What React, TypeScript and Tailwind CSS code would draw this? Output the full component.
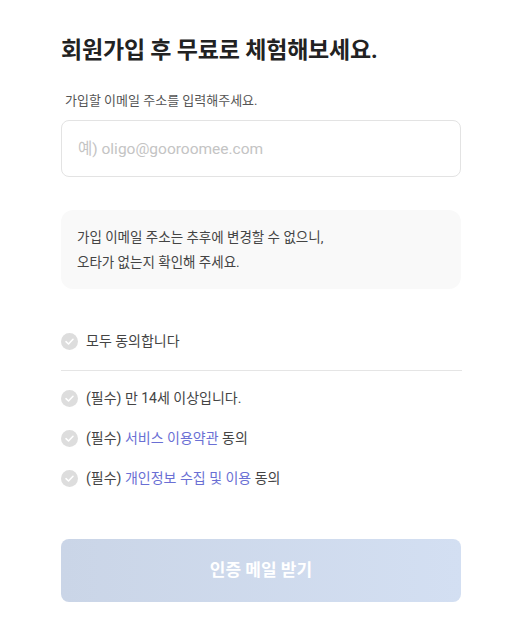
import React from "react";

const FONT = {
  fontFamily: '"Roboto", "Noto Sans CJK KR", sans-serif',
};

function CheckCircle() {
  return (
    <svg width="17" height="17" viewBox="0 0 17 17" className="shrink-0">
      <circle cx="8.5" cy="8.5" r="8.5" fill="#dddddd" />
      <path
        d="M5 8.7 L7.5 11 L12 6.3"
        fill="none"
        stroke="#ffffff"
        strokeWidth="1.6"
        strokeLinecap="round"
        strokeLinejoin="round"
      />
    </svg>
  );
}

function AgreeRow({ children }: { children: React.ReactNode }) {
  return (
    <div className="flex items-center gap-[8px] text-[14px] text-[#444] leading-[20px]">
      <CheckCircle />
      <span>{children}</span>
    </div>
  );
}

export default function App() {
  return (
    <div className="bg-white min-h-[640px] w-[516px]" style={FONT}>
      <div className="pl-[61px] pr-[55px] pt-[35px]">
        <h1 className="text-[23px] font-bold text-[#222] leading-[32px] tracking-[-0.2px]">
          회원가입 후 무료로 체험해보세요.
        </h1>

        <p className="mt-[25px] pl-[4px] text-[13px] text-[#555] leading-[18px]">
          가입할 이메일 주소를 입력해주세요.
        </p>

        <input
          type="text"
          placeholder="예) oligo@gooroomee.com"
          className="mt-[10px] w-full h-[57px] rounded-[8px] border border-[#e3e3e3] px-[16px] text-[15.5px] text-[#333] placeholder:text-[#c4c4c4] outline-none"
          style={FONT}
        />

        <div className="mt-[33px] rounded-[12px] bg-[#f9f9f9] px-[16px] pt-[15px] pb-[14px] text-[13.5px] text-[#444] leading-[25px]">
          <p>가입 이메일 주소는 추후에 변경할 수 없으니,</p>
          <p>오타가 없는지 확인해 주세요.</p>
        </div>

        <div className="mt-[42px]">
          <AgreeRow>모두 동의합니다</AgreeRow>
        </div>

        <div className="mt-[19px] h-px bg-[#e5e5e5] w-[401px]" />

        <div className="mt-[17px] flex flex-col gap-[20px]">
          <AgreeRow>(필수) 만 14세 이상입니다.</AgreeRow>
          <AgreeRow>
            (필수) <span className="text-[#6a6fd4]">서비스 이용약관</span> 동의
          </AgreeRow>
          <AgreeRow>
            (필수) <span className="text-[#6a6fd4]">개인정보 수집 및 이용</span> 동의
          </AgreeRow>
        </div>

        <button
          className="mt-[51px] w-full h-[63px] rounded-[8px] bg-gradient-to-r from-[#cad5e7] to-[#d3dff2] text-white text-[17px] font-bold"
          style={FONT}
        >
          인증 메일 받기
        </button>
      </div>
    </div>
  );
}
